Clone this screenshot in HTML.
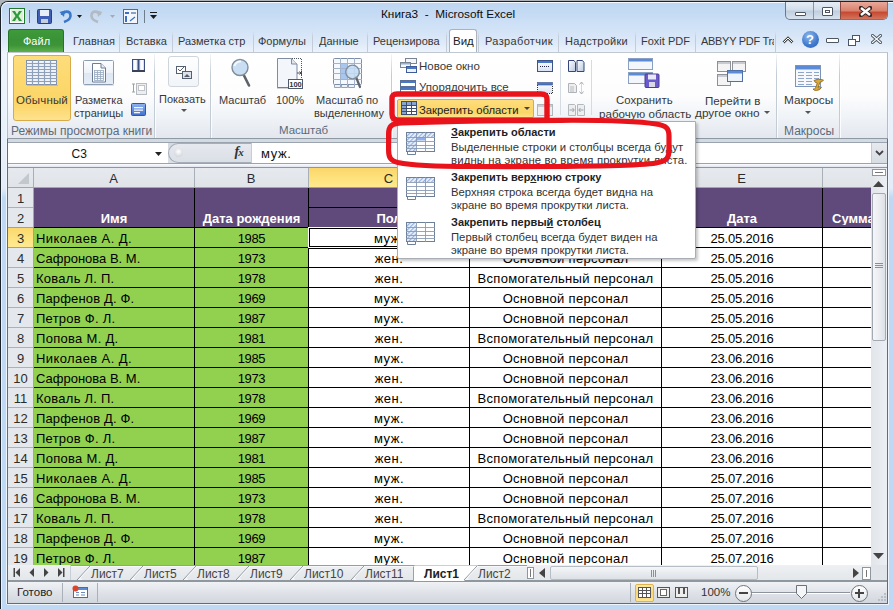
<!DOCTYPE html><html><head><meta charset="utf-8"><style>
*{margin:0;padding:0;box-sizing:border-box}
html,body{width:893px;height:609px;overflow:hidden;background:#c9d9ee}
body{position:relative;font-family:"Liberation Sans",sans-serif;color:#000}
.a{position:absolute}
.t{position:absolute;white-space:nowrap;line-height:1}
.rb{font-size:11px;color:#383838}
.cell{position:absolute;white-space:nowrap;font-size:13px;line-height:13px}
</style></head><body>
<div class="a" style="left:0;top:0;width:893px;height:609px;background:#aeb4ba"></div>
<div class="a" style="left:0;top:1px;width:900px;height:620px;background:linear-gradient(#bcd5f2,#cfe1f6 24px,#dde9f8 40px,#eef5fc 52px,#e3edf9 186px,#bfd8f4 196px,#bfd8f4);border-top:1px solid #1c232b;border-left:1px solid #1c232b;border-radius:8px 0 0 0"></div>
<div class="a" style="left:1px;top:2px;width:900px;height:620px;border-top:1px solid #f4f9ff;border-left:1px solid #e8f2fc;border-radius:7px 0 0 0"></div>
<div class="a" style="left:6px;top:52px;width:1px;height:552px;background:#eef5fd"></div>
<div class="a" style="left:7px;top:52px;width:1px;height:552px;background:#5f6e7e"></div>
<div class="a" style="left:887px;top:52px;width:1px;height:552px;background:#5f6e7e"></div>
<div class="a" style="left:888px;top:52px;width:1px;height:552px;background:#eef5fd"></div>
<div class="a" style="left:7px;top:603px;width:881px;height:1px;background:#5f6e7e"></div>
<div class="a" style="left:7px;top:604px;width:882px;height:1px;background:#eef5fd"></div>
<svg class="a" style="left:9px;top:8px" width="16" height="16" viewBox="0 0 16 16">
<rect x="0.5" y="0.5" width="15" height="15" fill="#fff" stroke="#1f7a2e"/>
<rect x="2" y="2" width="12" height="12" fill="#dff0da"/>
<path d="M3 3h3l2 3.5L10 3h3l-3.5 5L13 13h-3l-2-3.5L6 13H3l3.5-5z" fill="#2e9a3a"/>
</svg>
<div class="a" style="left:29px;top:10px;width:1px;height:13px;background:#6f7c8a"></div>
<svg class="a" style="left:37px;top:9px" width="15" height="15" viewBox="0 0 15 15">
<rect x="0.5" y="0.5" width="14" height="14" rx="1" fill="#3f5fb5" stroke="#2a3f80"/>
<rect x="3" y="1" width="9" height="6" fill="#e8eef8"/>
<rect x="4" y="10" width="7" height="4" fill="#c6cfdc"/>
</svg>
<svg class="a" style="left:59px;top:9px" width="26" height="15" viewBox="0 0 26 15">
<path d="M3 6 C4 2 11 1 11.5 6 C12 10 8 12 5 13" fill="none" stroke="#3a77c6" stroke-width="2.6"/>
<path d="M0.5 3 L6 1.5 L5 8 Z" fill="#3a77c6"/>
<path d="M18 6h5l-2.5 3z" fill="#1b1b1b"/>
</svg>
<svg class="a" style="left:90px;top:9px" width="28" height="15" viewBox="0 0 28 15">
<path d="M10 6 C9 2 2 1 1.5 6 C1 10 5 12 8 13" fill="none" stroke="#b4bac2" stroke-width="2.6"/>
<path d="M12.5 3 L7 1.5 L8 8 Z" fill="#b4bac2"/>
<path d="M20 6h5l-2.5 3z" fill="#a5abb3"/>
</svg>
<svg class="a" style="left:123px;top:9px" width="15" height="15" viewBox="0 0 15 15">
<rect x="0.5" y="0.5" width="14" height="14" fill="#f3f6fb" stroke="#5a6a85"/>
<rect x="2" y="3" width="4" height="2" fill="#3d6fc2"/><rect x="8" y="3" width="5" height="2" fill="#8aa1c8"/>
<rect x="2" y="7" width="2" height="6" fill="#3d6fc2"/><path d="M7 12 l5 -4" stroke="#3d6fc2" stroke-width="1.3"/>
</svg>
<div class="a" style="left:144px;top:10px;width:1px;height:13px;background:#6f7c8a"></div>
<div class="a" style="left:150px;top:12px;width:7px;height:1px;background:#1b1b1b"></div>
<svg class="a" style="left:150px;top:15px" width="7" height="4"><path d="M0 0h7l-3.5 4z" fill="#1b1b1b"/></svg>
<div class="t" style="left:381px;top:9px;font-size:11.8px;color:#0c0c0c">Книга3 &nbsp;- &nbsp;Microsoft Excel</div>
<div class="a" style="left:785px;top:2px;width:103px;height:18px;border:1px solid #6b7889;border-top:none;border-radius:0 0 5px 5px;overflow:hidden;background:linear-gradient(#e6edf6,#d3deeb 45%,#c0cede 55%,#d8e3ef)">
<div class="a" style="left:27px;top:0;width:1px;height:19px;background:#8895a5"></div>
<div class="a" style="left:54px;top:0;width:48px;height:19px;background:linear-gradient(#e9a99a,#d9826e 45%,#c64a32 55%,#d8806a);border-left:1px solid #8a4a40"></div>
<div class="a" style="left:9px;top:10px;width:11px;height:4px;background:#fff;border:1px solid #4b5563;border-radius:1px"></div>
<div class="a" style="left:36px;top:5px;width:11px;height:9px;border:1px solid #4b5563;background:#fff;border-radius:1px"><div class="a" style="left:2px;top:2px;width:5px;height:3px;border:1px solid #4b5563"></div></div>
<svg class="a" style="left:73px;top:4px" width="13" height="11" viewBox="0 0 13 11"><path d="M2 2 L11 9 M11 2 L2 9" stroke="#3a2a28" stroke-width="4.4" stroke-linecap="square"/><path d="M2 2 L11 9 M11 2 L2 9" stroke="#fff" stroke-width="2.4" stroke-linecap="butt"/></svg>
</div>
<div class="a" style="left:8px;top:29px;width:56px;height:23px;border-radius:3px 3px 0 0;background:linear-gradient(#3f9a3a,#3a9236 45%,#3e9538 70%,#5cb04c);border:1px solid #257527;border-bottom:none"></div>
<div class="t" style="left:23px;top:36px;font-size:11px;color:#fff">Файл</div>
<div class="t rb" style="left:73px;top:36px;font-size:11px;width:45px;overflow:hidden;letter-spacing:0px">Главная</div>
<div class="t rb" style="left:126px;top:36px;font-size:11px;width:45px;overflow:hidden;letter-spacing:0px">Вставка</div>
<div class="t rb" style="left:178px;top:36px;font-size:11px;width:74px;overflow:hidden;letter-spacing:0px">Разметка стр</div>
<div class="t rb" style="left:258px;top:36px;font-size:11px;width:53px;overflow:hidden;letter-spacing:0px">Формулы</div>
<div class="t rb" style="left:319px;top:36px;font-size:11px;width:47px;overflow:hidden;letter-spacing:0px">Данные</div>
<div class="t rb" style="left:373px;top:36px;font-size:11px;width:72px;overflow:hidden;letter-spacing:0px">Рецензирова</div>
<div class="a" style="left:449px;top:29px;width:28px;height:24px;background:linear-gradient(#fff,#fdfeff);border:1px solid #aab2bd;border-bottom:none;border-radius:3px 3px 0 0"></div>
<div class="t rb" style="left:453px;top:36px;font-size:11.5px;color:#222">Вид</div>
<div class="t rb" style="left:485px;top:36px;font-size:11px;width:72px;overflow:hidden;letter-spacing:0.35px">Разработчик</div>
<div class="t rb" style="left:565px;top:36px;font-size:11px;width:69px;overflow:hidden;letter-spacing:0.25px">Надстройки</div>
<div class="t rb" style="left:641px;top:36px;font-size:11px;width:53px;overflow:hidden;letter-spacing:0px">Foxit PDF</div>
<div class="t rb" style="left:701px;top:36px;font-size:11px;width:73px;overflow:hidden;letter-spacing:-0.3px">ABBYY PDF Tra</div>
<div class="a" style="left:119px;top:31px;width:1px;height:21px;background:linear-gradient(rgba(255,255,255,0),#c3ccd8 30%,#c3ccd8)"></div>
<div class="a" style="left:172px;top:31px;width:1px;height:21px;background:linear-gradient(rgba(255,255,255,0),#c3ccd8 30%,#c3ccd8)"></div>
<div class="a" style="left:253px;top:31px;width:1px;height:21px;background:linear-gradient(rgba(255,255,255,0),#c3ccd8 30%,#c3ccd8)"></div>
<div class="a" style="left:312px;top:31px;width:1px;height:21px;background:linear-gradient(rgba(255,255,255,0),#c3ccd8 30%,#c3ccd8)"></div>
<div class="a" style="left:367px;top:31px;width:1px;height:21px;background:linear-gradient(rgba(255,255,255,0),#c3ccd8 30%,#c3ccd8)"></div>
<div class="a" style="left:446px;top:31px;width:1px;height:21px;background:linear-gradient(rgba(255,255,255,0),#c3ccd8 30%,#c3ccd8)"></div>
<div class="a" style="left:478px;top:31px;width:1px;height:21px;background:linear-gradient(rgba(255,255,255,0),#c3ccd8 30%,#c3ccd8)"></div>
<div class="a" style="left:558px;top:31px;width:1px;height:21px;background:linear-gradient(rgba(255,255,255,0),#c3ccd8 30%,#c3ccd8)"></div>
<div class="a" style="left:635px;top:31px;width:1px;height:21px;background:linear-gradient(rgba(255,255,255,0),#c3ccd8 30%,#c3ccd8)"></div>
<div class="a" style="left:695px;top:31px;width:1px;height:21px;background:linear-gradient(rgba(255,255,255,0),#c3ccd8 30%,#c3ccd8)"></div>
<div class="a" style="left:775px;top:31px;width:1px;height:21px;background:linear-gradient(rgba(255,255,255,0),#c3ccd8 30%,#c3ccd8)"></div>
<svg class="a" style="left:782px;top:35px" width="12" height="10"><path d="M1.5 7.5 L6 3 L10.5 7.5" fill="none" stroke="#444" stroke-width="2.6"/><path d="M1.5 7.5 L6 3 L10.5 7.5" fill="none" stroke="#fff" stroke-width="1"/></svg>
<div class="a" style="left:802px;top:31px;width:17px;height:17px;border-radius:50%;background:radial-gradient(circle at 40% 30%,#8fb8ec,#3f78cc 60%,#2d62b5)"></div>
<div class="t" style="left:806px;top:33px;font-size:13px;font-weight:bold;color:#fff">?</div>
<div class="a" style="left:826px;top:38px;width:13px;height:5px;border:1px solid #4b5563;background:#fff;border-radius:1px"></div>
<div class="a" style="left:852px;top:35px;width:8px;height:7px;border:1px solid #4b5563;background:#fff"></div><div class="a" style="left:848px;top:39px;width:8px;height:7px;border:1px solid #4b5563;background:#fff"></div>
<svg class="a" style="left:871px;top:34px" width="11" height="10"><path d="M1.5 1.5 L9.5 8.5 M9.5 1.5 L1.5 8.5" stroke="#4b5563" stroke-width="3" stroke-linecap="square"/><path d="M1.5 1.5 L9.5 8.5 M9.5 1.5 L1.5 8.5" stroke="#fff" stroke-width="1.2" stroke-linecap="square"/></svg>
<div class="a" style="left:7px;top:52px;width:881px;height:87px;background:linear-gradient(#fff,#fdfdfe 50%,#f0f3f7 75%,#e3e7ee);border:1px solid #b6bcc6;border-top-color:#c0c8d2"></div>
<div class="a" style="left:154px;top:54px;width:1px;height:84px;background:linear-gradient(rgba(200,208,218,.2),#c3cbd5 25%,#c3cbd5)"></div><div class="a" style="left:155px;top:54px;width:1px;height:84px;background:rgba(255,255,255,.8)"></div>
<div class="a" style="left:210px;top:54px;width:1px;height:84px;background:linear-gradient(rgba(200,208,218,.2),#c3cbd5 25%,#c3cbd5)"></div><div class="a" style="left:211px;top:54px;width:1px;height:84px;background:rgba(255,255,255,.8)"></div>
<div class="a" style="left:391px;top:54px;width:1px;height:84px;background:linear-gradient(rgba(200,208,218,.2),#c3cbd5 25%,#c3cbd5)"></div><div class="a" style="left:392px;top:54px;width:1px;height:84px;background:rgba(255,255,255,.8)"></div>
<div class="a" style="left:776px;top:54px;width:1px;height:84px;background:linear-gradient(rgba(200,208,218,.2),#c3cbd5 25%,#c3cbd5)"></div><div class="a" style="left:777px;top:54px;width:1px;height:84px;background:rgba(255,255,255,.8)"></div>
<div class="a" style="left:839px;top:54px;width:1px;height:84px;background:linear-gradient(rgba(200,208,218,.2),#c3cbd5 25%,#c3cbd5)"></div><div class="a" style="left:840px;top:54px;width:1px;height:84px;background:rgba(255,255,255,.8)"></div>
<div class="a" style="left:887px;top:53px;width:1px;height:85px;background:#b6bcc6"></div>
<div class="t" style="left:11px;top:125px;font-size:12px;color:#5c6a7c">Режимы просмотра книги</div>
<div class="t" style="left:279px;top:125px;font-size:11.5px;color:#5c6a7c">Масштаб</div>
<div class="t" style="left:784px;top:125px;font-size:12px;color:#5c6a7c">Макросы</div>
<div class="a" style="left:13px;top:55px;width:58px;height:66px;border:1px solid #d9aa4a;border-radius:3px;background:linear-gradient(#fddd7c,#fcd86e 40%,#fbd566 75%,#fde38e)"></div>
<svg class="a" style="left:26px;top:60px" width="32" height="26" viewBox="0 0 32 26"><rect x="1" y="25" width="31" height="1" fill="rgba(0,0,0,.12)"/><rect x="0.5" y="0.5" width="30" height="24" fill="#f8faff" stroke="#8090aa"/><line x1="0" y1="3.5" x2="31" y2="3.5" stroke="#8fa0bb" stroke-width="1.2"/><line x1="0" y1="6.5" x2="31" y2="6.5" stroke="#8fa0bb" stroke-width="1.2"/><line x1="0" y1="9.5" x2="31" y2="9.5" stroke="#8fa0bb" stroke-width="1.2"/><line x1="0" y1="12.5" x2="31" y2="12.5" stroke="#8fa0bb" stroke-width="1.2"/><line x1="0" y1="15.5" x2="31" y2="15.5" stroke="#8fa0bb" stroke-width="1.2"/><line x1="0" y1="18.5" x2="31" y2="18.5" stroke="#8fa0bb" stroke-width="1.2"/><line x1="0" y1="21.5" x2="31" y2="21.5" stroke="#8fa0bb" stroke-width="1.2"/><line x1="6.5" y1="0" x2="6.5" y2="25" stroke="#8fa0bb" stroke-width="1.2"/><line x1="12.5" y1="0" x2="12.5" y2="25" stroke="#8fa0bb" stroke-width="1.2"/><line x1="18.5" y1="0" x2="18.5" y2="25" stroke="#8fa0bb" stroke-width="1.2"/><line x1="24.5" y1="0" x2="24.5" y2="25" stroke="#8fa0bb" stroke-width="1.2"/></svg>
<div class="t" style="left:16px;top:95px;font-size:11.5px;color:#383838;letter-spacing:0.15px">Обычный</div>
<svg class="a" style="left:83px;top:60px" width="32" height="26" viewBox="0 0 32 26">
<defs><linearGradient id="plg" x1="0" y1="0" x2="0" y2="1"><stop offset="0" stop-color="#fdfdfe"/><stop offset=".5" stop-color="#eef3f9"/><stop offset=".52" stop-color="#dde7f3"/><stop offset="1" stop-color="#e6edf6"/></linearGradient></defs>
<rect x="1" y="25" width="30" height="1" fill="rgba(0,0,0,.1)"/>
<rect x="0.5" y="0.5" width="30" height="24" rx="1" fill="url(#plg)" stroke="#8e9db3"/>
<path d="M9.5 3.5h8.5l4.5 4.5v14h-13z" fill="#fff" stroke="#6d7d94"/>
<path d="M18 3.5v4.5h4.5" fill="#e9eef5" stroke="#6d7d94"/>
<rect x="11.5" y="10.5" width="9" height="10" fill="#f4f7fb" stroke="#98a8c0" stroke-width=".8"/>
<path d="M11.5 12.5h9M11.5 14.5h9M11.5 16.5h9M11.5 18.5h9M14.5 10.5v10M17.5 10.5v10" stroke="#98a8c0" stroke-width=".8"/>
</svg>
<div class="t rb" style="left:75px;top:95px">Разметка</div>
<div class="t rb" style="left:74px;top:108px">страницы</div>
<svg class="a" style="left:132px;top:59px" width="13" height="13"><rect x="0.5" y="0.5" width="12" height="12" fill="#eef2fa" stroke="#3c4f80"/><rect x="1" y="1" width="4.5" height="10" fill="#d8e4f6"/><rect x="7.5" y="1" width="4.5" height="10" fill="#d8e4f6"/><rect x="2" y="1" width="2.5" height="10" fill="#fbfcff"/><rect x="8.5" y="1" width="2.5" height="10" fill="#fbfcff"/><rect x="5.5" y="1" width="2" height="11" fill="#3c4f80"/><rect x="0" y="11" width="13" height="2" fill="#3a4258"/></svg>
<svg class="a" style="left:131px;top:80px" width="16" height="15"><rect x="5.5" y="3.5" width="10" height="11" fill="#eee" stroke="#b7bcc3"/><rect x="7.5" y="5.5" width="6" height="5" fill="#fff" stroke="#c0c4ca"/><path d="M1 4h3M2.5 4v8M1 12h3" stroke="#9aa0a8"/></svg>
<svg class="a" style="left:131px;top:103px" width="15" height="13"><defs><linearGradient id="fsg" x1="0" y1="0" x2="0" y2="1"><stop offset="0" stop-color="#8fb4ee"/><stop offset="1" stop-color="#3f6fd0"/></linearGradient></defs><rect x="0.5" y="0.5" width="14" height="12" rx="1" fill="url(#fsg)" stroke="#34569a"/><rect x="3" y="4" width="9" height="1.3" fill="#f2f6fd"/><rect x="3" y="6.5" width="9" height="1.3" fill="#f2f6fd"/><rect x="3" y="9" width="6" height="1.3" fill="#f2f6fd"/></svg>
<div class="a" style="left:168px;top:56px;width:31px;height:31px;border:1px solid #cfd5dd;border-radius:3px;background:linear-gradient(#fff,#f1f4f8)"></div>
<svg class="a" style="left:176px;top:64px" width="16" height="15"><rect x="0.5" y="2.5" width="9" height="7" fill="#fff" stroke="#55606e"/><path d="M2 5l2 2 4-4" stroke="#55606e" fill="none"/><rect x="6.5" y="7.5" width="9" height="7" fill="#dde3ea" stroke="#55606e"/><path d="M8 13l3-3 3 3z" fill="#55606e"/></svg>
<div class="t rb" style="left:159px;top:93.5px">Показать</div>
<svg class="a" style="left:181px;top:109px" width="6" height="4"><path d="M0 0h6l-3 3z" fill="#555"/></svg>
<svg class="a" style="left:231px;top:58px" width="21" height="30" viewBox="0 0 21 30">
<path d="M12.5 16.5 L18 27.5" stroke="#5e636a" stroke-width="2.6" stroke-linecap="round"/>
<circle cx="9" cy="9.5" r="8" fill="#c9def2" stroke="#7f8c9b" stroke-width="1.4"/>
<path d="M3.5 8 A6 6 0 0 1 10 3.5" stroke="#f4f9fe" stroke-width="2" fill="none"/>
</svg>
<div class="t rb" style="left:219px;top:95px">Масштаб</div>
<svg class="a" style="left:277px;top:58px" width="27" height="31" viewBox="0 0 27 31">
<path d="M0.5 0.5h14l5.5 5.5v23.5H0.5z" fill="#f3f6fb" stroke="#7f8da3"/>
<path d="M14.5 0.5v5.5h5.5" fill="#dfe6ef" stroke="#7f8da3"/>
<path d="M15 0.5h9.5v29.5h-24" fill="none" stroke="#4d5560" stroke-dasharray="1 1"/>
<path d="M20 15h4M22.5 13.5l1.5 1.5-1.5 1.5M24.5 12.5v5" stroke="#3a3f46" stroke-width="0.9" fill="none"/>
<rect x="11.5" y="21.5" width="14" height="9" fill="#fff" stroke="#4f5a68"/>
<text x="18.5" y="29" font-size="7.5" text-anchor="middle" font-family="Liberation Sans" font-weight="bold" fill="#2a3548">100</text>
</svg>
<div class="t rb" style="left:276px;top:95px">100%</div>
<svg class="a" style="left:333px;top:58px" width="30" height="31" viewBox="0 0 30 31">
<rect x="0.5" y="0.5" width="28" height="26" rx="1" fill="#f5f8fc" stroke="#7d8ea8"/>
<rect x="7.5" y="5.5" width="7" height="16" fill="#a9c6ee"/>
<path d="M0 5.5h29M0 10.5h29M0 15.5h29M0 21.5h29M7.5 0v27M14.5 0v27M21.5 0v27" stroke="#a3b3cc"/>
<path d="M1.5 27v2.5h6v-2.5M8.5 27v2.5h6v-2.5M15.5 27v2.5h6v-2.5" fill="#eef2f8" stroke="#7d8ea8" stroke-width=".8"/>
<path d="M23 19 L27 29" stroke="#5e636a" stroke-width="2.2" stroke-linecap="round"/>
<circle cx="19.5" cy="14" r="6.8" fill="#c2daf3" fill-opacity=".85" stroke="#7f8c9b" stroke-width="1.3"/>
</svg>
<div class="t rb" style="left:316px;top:95px">Масштаб по</div>
<div class="t rb" style="left:314px;top:108px">выделенному</div>
<svg class="a" style="left:400px;top:58px" width="17" height="15"><rect x="5.5" y="0.5" width="11" height="5" fill="#f4f6f9" stroke="#7a8594"/><rect x="0.5" y="4.5" width="10" height="5" fill="#f4f6f9" stroke="#7a8594"/><rect x="1" y="5" width="9" height="1.5" fill="#8fb0e0"/><rect x="6.5" y="8.5" width="10" height="6" fill="#eef3fa" stroke="#3e5a9a"/><rect x="7" y="9" width="9" height="2" fill="#4a78c8"/></svg>
<div class="t rb" style="left:419px;top:61px;font-size:11.5px">Новое окно</div>
<svg class="a" style="left:400px;top:80px" width="16" height="14"><rect x="0.5" y="0.5" width="15" height="6" fill="#fff" stroke="#5a6f96"/><rect x="1" y="1" width="14" height="2" fill="#4a78c8"/><rect x="0.5" y="7.5" width="15" height="6" fill="#fff" stroke="#5a6f96"/><rect x="1" y="8" width="14" height="2" fill="#4a78c8"/></svg>
<div class="t rb" style="left:419px;top:82px;font-size:11.5px">Упорядочить все</div>
<div class="a" style="left:397px;top:99px;width:137px;height:19px;border:1px solid #d9aa4a;border-radius:2px;background:linear-gradient(#fddd7c,#fcd86e 40%,#fbd566 75%,#fde38e)"></div>
<svg class="a" style="left:401px;top:101px" width="16" height="15"><rect x="0.5" y="0.5" width="15" height="13" fill="#fff" stroke="#3e4e6e"/><rect x="1" y="1" width="14" height="3" fill="#8aa4d0"/><rect x="1" y="1" width="4" height="12" fill="#8aa4d0"/><path d="M0 4.5h16M0 7.5h16M0 10.5h16M5.5 0v14M10.5 0v14" stroke="#3e4e6e"/></svg>
<div class="t rb" style="left:419px;top:105px;color:#222;font-size:11.3px">Закрепить области</div>
<svg class="a" style="left:524px;top:107px" width="6" height="4"><path d="M0 0h6l-3 3z" fill="#444"/></svg>
<svg class="a" style="left:537px;top:60px" width="16" height="12"><defs><linearGradient id="wg1" x1="0" y1="0" x2="0" y2="1"><stop offset="0" stop-color="#fff"/><stop offset="1" stop-color="#d9e3f2"/></linearGradient></defs><rect x="0.5" y="0.5" width="15" height="11" fill="url(#wg1)" stroke="#3e5388"/><rect x="1" y="1" width="14" height="2" fill="#4a78c8"/><path d="M3 6.5h10" stroke="#1e2a44" stroke-width="1.2" stroke-dasharray="1 1"/></svg>
<svg class="a" style="left:537px;top:82px" width="16" height="12"><rect x="0.5" y="0.5" width="15" height="11" fill="url(#wg1)"/><rect x="0.5" y="0.5" width="15" height="2.5" fill="#4a78c8" stroke="#3e5388" stroke-width=".6"/><path d="M0.5 3v8.5h15V3" fill="none" stroke="#333" stroke-dasharray="1 1"/></svg>
<svg class="a" style="left:537px;top:104px" width="16" height="12"><rect x="0.5" y="0.5" width="15" height="11" fill="#efefef" stroke="#b1b6bd"/><rect x="1" y="1" width="14" height="2" fill="#c9ccd1"/></svg>
<div class="a" style="left:560px;top:60px;width:1px;height:55px;background:#d5dbe3"></div>
<svg class="a" style="left:568px;top:60px" width="17" height="12"><defs><linearGradient id="pg1" x1="0" y1="0" x2="1" y2="1"><stop offset="0" stop-color="#fff"/><stop offset="1" stop-color="#b9c9e2"/></linearGradient></defs><path d="M0.5 0.5h5.5l1.5 2v9h-7z" fill="url(#pg1)" stroke="#34477a"/><path d="M9 0.5h5.5l1.5 2v9h-7z" fill="url(#pg1)" stroke="#34477a"/></svg>
<svg class="a" style="left:568px;top:81px" width="17" height="14"><path d="M0.5 2.5h6l2 2v7h-8z" fill="#eee" stroke="#aeb3ba"/><path d="M2 6h4M2 8h4M2 10h4" stroke="#b8bdc4"/><path d="M13.5 1.5v11" stroke="#a8aeb6" stroke-dasharray="1 1"/><path d="M11.5 3.5l2-2.5 2 2.5M11.5 10.5l2 2.5 2-2.5" stroke="#a8aeb6" fill="none"/></svg>
<svg class="a" style="left:568px;top:104px" width="17" height="12"><path d="M0.5 0.5h6l1 1v10h-7z" fill="#eee" stroke="#b3b8bf"/><path d="M9.5 0.5h6l1 1v10h-7z" fill="#eee" stroke="#b3b8bf"/><path d="M1.5 6h4.5M4.5 4l1.8 2-1.8 2M15.5 6h-4.5M12.5 4l-1.8 2 1.8 2" stroke="#9aa0a8" fill="none"/></svg>
<div class="a" style="left:591px;top:60px;width:1px;height:55px;background:#d5dbe3"></div>
<svg class="a" style="left:628px;top:58px" width="32" height="30" viewBox="0 0 32 30">
<rect x="0.5" y="0.5" width="24" height="11" fill="#f3f6fb" stroke="#8aa0c2"/><rect x="1" y="1" width="23" height="2.5" fill="#5b8ad6"/>
<rect x="0.5" y="14.5" width="24" height="11" fill="#f3f6fb" stroke="#8aa0c2"/><rect x="1" y="15" width="23" height="2.5" fill="#5b8ad6"/>
<rect x="17" y="16" width="14" height="13.5" rx="1" fill="#6a5acd" stroke="#4a3f8f"/><rect x="20" y="16.5" width="8" height="5" fill="#e8e8f8"/><rect x="21" y="24" width="6" height="5" fill="#d8d8e8"/>
</svg>
<div class="t rb" style="left:616px;top:95px;font-size:11.4px">Сохранить</div>
<div class="t rb" style="left:599px;top:108px;font-size:11.6px">рабочую область</div>
<svg class="a" style="left:717px;top:61px" width="31" height="26" viewBox="0 0 31 26">
<rect x="0.5" y="0.5" width="13" height="10" fill="#f4f4f4" stroke="#8c9097"/><rect x="1" y="1" width="12" height="2" fill="#c8ccd2"/>
<rect x="15.5" y="0.5" width="13" height="10" fill="#f4f4f4" stroke="#8c9097"/><rect x="16" y="1" width="12" height="2" fill="#c8ccd2"/>
<rect x="0.5" y="13.5" width="13" height="11" fill="#f4f4f4" stroke="#8c9097"/><rect x="1" y="14" width="12" height="2" fill="#c8ccd2"/>
<rect x="10.5" y="9.5" width="15" height="11" fill="#eef4fc" stroke="#4f6fa8"/><rect x="11" y="10" width="14" height="2.5" fill="#5b8ad6"/>
</svg>
<div class="t rb" style="left:705px;top:95px;font-size:11.6px">Перейти в</div>
<div class="t rb" style="left:695px;top:108px;font-size:11.8px">другое окно</div>
<svg class="a" style="left:764px;top:111px" width="6" height="4"><path d="M0 0h6l-3 3z" fill="#555"/></svg>
<svg class="a" style="left:795px;top:65px" width="30" height="26" viewBox="0 0 30 26">
<rect x="0.5" y="0.5" width="25" height="21" fill="#f6f8fc" stroke="#7d93b8"/><rect x="1" y="1" width="24" height="3.5" fill="#5b8ad6"/>
<path d="M3 7.5h6M11 7.5h6M19 7.5h5M3 10.5h6M11 10.5h6M19 10.5h5M3 13.5h6M11 13.5h6M19 13.5h5M3 16.5h6M11 16.5h6M3 19.5h6M11 19.5h6" stroke="#8ea6cc" stroke-width="1.2"/>
<path d="M19 15.5 q4 -2.5 9.5 -0.5 q-1 2 -3.5 2.2 l-2 5.5 q2 0.5 3.5 -0.5 q-1 3 -5 3.3 q-3 0 -3.5 -1.5 q2 0.3 2.5 -1 l1.8 -5 q-2 0.3 -3.3 -2.5z" fill="#d9a93a" stroke="#8a6418" stroke-width="0.8"/>
</svg>
<div class="t rb" style="left:784px;top:95px;font-size:11.8px">Макросы</div>
<svg class="a" style="left:805px;top:111px" width="6" height="4"><path d="M0 0h6l-3 3z" fill="#555"/></svg>
<div class="a" style="left:7px;top:138px;width:881px;height:1px;background:#8f99a4"></div>
<div class="a" style="left:8px;top:139px;width:879px;height:29px;background:linear-gradient(#d3d9e0,#dde2e8)"></div>
<div class="a" style="left:8px;top:142px;width:879px;height:1px;background:#9ba4ae"></div>
<div class="a" style="left:8px;top:163px;width:879px;height:1px;background:#9ba4ae"></div>
<div class="a" style="left:8px;top:164px;width:879px;height:3px;background:linear-gradient(#fafbfd,#e3e6f3)"></div>
<div class="a" style="left:8px;top:167px;width:879px;height:1px;background:#8e969f"></div>
<div class="a" style="left:8px;top:143px;width:160px;height:20px;background:#fff"></div>
<div class="t" style="left:71.5px;top:148px;font-size:12px;color:#111">C3</div>
<svg class="a" style="left:155px;top:152px" width="7" height="5"><path d="M0 0h7l-3.5 4z" fill="#222"/></svg>
<div class="a" style="left:168px;top:143px;width:84px;height:20px;background:linear-gradient(#e6e9ee,#dadfe6);border-radius:10px 0 0 10px;border:1px solid #a6aeb8;border-right:1px solid #c7cdd4"></div>
<div class="a" style="left:174px;top:148px;width:9px;height:9px;border-radius:50%;background:radial-gradient(circle at 50% 40%,#fff,#c4c9d0)"></div>
<div class="t" style="left:234.5px;top:145px;font-size:14px;font-style:italic;font-family:'Liberation Serif',serif;color:#333;font-weight:bold">f<span style="font-size:11px;margin-left:-1px">x</span></div>
<div class="a" style="left:252px;top:143px;width:619px;height:20px;background:#fff"></div>
<div class="t" style="left:261px;top:147px;font-size:13px;color:#111;letter-spacing:0.6px">муж.</div>
<div class="a" style="left:871px;top:143px;width:16px;height:20px;background:linear-gradient(#e6e9ee,#d8dde4);border-left:1px solid #c4cad1"></div>
<svg class="a" style="left:875px;top:150px" width="9" height="6"><path d="M1 1l3.5 3.5L8 1" fill="none" stroke="#444" stroke-width="1.8"/></svg>
<div class="a" style="left:8px;top:168px;width:863px;height:397px;background:#fff"></div>
<div class="a" style="left:8px;top:168px;width:863px;height:19px;background:linear-gradient(#e6e9ed,#e0e3e8)"></div>
<div class="a" style="left:8px;top:187px;width:863px;height:1px;background:#9ea6b1"></div>
<svg class="a" style="left:18px;top:173px" width="12" height="11"><path d="M11 0V11H0z" fill="#c3c8ce"/></svg>
<div class="a" style="left:33px;top:168px;width:1px;height:19px;background:#a9afb7"></div>
<div class="t" style="left:93.5px;width:40px;text-align:center;top:172px;font-size:13px;color:#2b2b2b">A</div>
<div class="a" style="left:194px;top:168px;width:1px;height:19px;background:#a9afb7"></div>
<div class="t" style="left:231.0px;width:40px;text-align:center;top:172px;font-size:13px;color:#2b2b2b">B</div>
<div class="a" style="left:308px;top:168px;width:162px;height:20px;background:linear-gradient(#fad66b,#fde17a 50%,#ffe98e);border:1px solid #d59b32;border-top:none"></div>
<div class="a" style="left:308px;top:168px;width:1px;height:19px;background:#a9afb7"></div>
<div class="t" style="left:368.5px;width:40px;text-align:center;top:172px;font-size:13px;color:#2b2b2b">C</div>
<div class="a" style="left:469px;top:168px;width:1px;height:19px;background:#a9afb7"></div>
<div class="t" style="left:545.0px;width:40px;text-align:center;top:172px;font-size:13px;color:#2b2b2b">D</div>
<div class="a" style="left:661px;top:168px;width:1px;height:19px;background:#a9afb7"></div>
<div class="t" style="left:721.5px;width:40px;text-align:center;top:172px;font-size:13px;color:#2b2b2b">E</div>
<div class="a" style="left:822px;top:168px;width:1px;height:19px;background:#a9afb7"></div>
<div class="t" style="left:891.0px;width:40px;text-align:center;top:172px;font-size:13px;color:#2b2b2b">F</div>
<div class="a" style="left:8px;top:188px;width:25px;height:377px;background:#e4e7ec"></div>
<div class="a" style="left:33px;top:188px;width:1px;height:377px;background:#9ea6b1"></div>
<div class="a" style="left:8px;top:207px;width:25px;height:1px;background:#a9b1ba"></div>
<div class="t" style="left:8px;width:25px;text-align:center;top:192px;font-size:13px;color:#2b2b2b">1</div>
<div class="a" style="left:8px;top:227px;width:25px;height:1px;background:#a9b1ba"></div>
<div class="t" style="left:8px;width:25px;text-align:center;top:212px;font-size:13px;color:#2b2b2b">2</div>
<div class="a" style="left:8px;top:227px;width:26px;height:21px;background:linear-gradient(#fbd86e,#fde27e 50%,#ffe890);border:1px solid #d59b32;border-left:none"></div>
<div class="t" style="left:8px;width:25px;text-align:center;top:232px;font-size:13px;color:#2b2b2b">3</div>
<div class="a" style="left:8px;top:267px;width:25px;height:1px;background:#a9b1ba"></div>
<div class="t" style="left:8px;width:25px;text-align:center;top:252px;font-size:13px;color:#2b2b2b">4</div>
<div class="a" style="left:8px;top:287px;width:25px;height:1px;background:#a9b1ba"></div>
<div class="t" style="left:8px;width:25px;text-align:center;top:272px;font-size:13px;color:#2b2b2b">5</div>
<div class="a" style="left:8px;top:307px;width:25px;height:1px;background:#a9b1ba"></div>
<div class="t" style="left:8px;width:25px;text-align:center;top:292px;font-size:13px;color:#2b2b2b">6</div>
<div class="a" style="left:8px;top:327px;width:25px;height:1px;background:#a9b1ba"></div>
<div class="t" style="left:8px;width:25px;text-align:center;top:312px;font-size:13px;color:#2b2b2b">7</div>
<div class="a" style="left:8px;top:347px;width:25px;height:1px;background:#a9b1ba"></div>
<div class="t" style="left:8px;width:25px;text-align:center;top:332px;font-size:13px;color:#2b2b2b">8</div>
<div class="a" style="left:8px;top:367px;width:25px;height:1px;background:#a9b1ba"></div>
<div class="t" style="left:8px;width:25px;text-align:center;top:352px;font-size:13px;color:#2b2b2b">9</div>
<div class="a" style="left:8px;top:387px;width:25px;height:1px;background:#a9b1ba"></div>
<div class="t" style="left:8px;width:25px;text-align:center;top:372px;font-size:13px;color:#2b2b2b">10</div>
<div class="a" style="left:8px;top:407px;width:25px;height:1px;background:#a9b1ba"></div>
<div class="t" style="left:8px;width:25px;text-align:center;top:392px;font-size:13px;color:#2b2b2b">11</div>
<div class="a" style="left:8px;top:427px;width:25px;height:1px;background:#a9b1ba"></div>
<div class="t" style="left:8px;width:25px;text-align:center;top:412px;font-size:13px;color:#2b2b2b">12</div>
<div class="a" style="left:8px;top:447px;width:25px;height:1px;background:#a9b1ba"></div>
<div class="t" style="left:8px;width:25px;text-align:center;top:432px;font-size:13px;color:#2b2b2b">13</div>
<div class="a" style="left:8px;top:467px;width:25px;height:1px;background:#a9b1ba"></div>
<div class="t" style="left:8px;width:25px;text-align:center;top:452px;font-size:13px;color:#2b2b2b">14</div>
<div class="a" style="left:8px;top:487px;width:25px;height:1px;background:#a9b1ba"></div>
<div class="t" style="left:8px;width:25px;text-align:center;top:472px;font-size:13px;color:#2b2b2b">15</div>
<div class="a" style="left:8px;top:507px;width:25px;height:1px;background:#a9b1ba"></div>
<div class="t" style="left:8px;width:25px;text-align:center;top:492px;font-size:13px;color:#2b2b2b">16</div>
<div class="a" style="left:8px;top:527px;width:25px;height:1px;background:#a9b1ba"></div>
<div class="t" style="left:8px;width:25px;text-align:center;top:512px;font-size:13px;color:#2b2b2b">17</div>
<div class="a" style="left:8px;top:547px;width:25px;height:1px;background:#a9b1ba"></div>
<div class="t" style="left:8px;width:25px;text-align:center;top:532px;font-size:13px;color:#2b2b2b">18</div>
<div class="a" style="left:8px;top:567px;width:25px;height:1px;background:#a9b1ba"></div>
<div class="t" style="left:8px;width:25px;text-align:center;top:552px;font-size:13px;color:#2b2b2b">19</div>
<div class="a" style="left:34px;top:188px;width:837px;height:39px;background:#604a7b"></div>
<div class="a" style="left:34px;top:228px;width:274px;height:337px;background:#92d050"></div>
<div class="a" style="left:194px;top:188px;width:1px;height:377px;background:#000"></div>
<div class="a" style="left:308px;top:188px;width:1px;height:377px;background:#000"></div>
<div class="a" style="left:469px;top:188px;width:1px;height:377px;background:#000"></div>
<div class="a" style="left:661px;top:188px;width:1px;height:377px;background:#000"></div>
<div class="a" style="left:822px;top:188px;width:1px;height:377px;background:#000"></div>
<div class="a" style="left:308px;top:207px;width:353px;height:1px;background:#000"></div>
<div class="a" style="left:34px;top:227px;width:837px;height:1px;background:#000"></div>
<div class="a" style="left:34px;top:247px;width:837px;height:1px;background:#000"></div>
<div class="a" style="left:34px;top:267px;width:837px;height:1px;background:#000"></div>
<div class="a" style="left:34px;top:287px;width:837px;height:1px;background:#000"></div>
<div class="a" style="left:34px;top:307px;width:837px;height:1px;background:#000"></div>
<div class="a" style="left:34px;top:327px;width:837px;height:1px;background:#000"></div>
<div class="a" style="left:34px;top:347px;width:837px;height:1px;background:#000"></div>
<div class="a" style="left:34px;top:367px;width:837px;height:1px;background:#000"></div>
<div class="a" style="left:34px;top:387px;width:837px;height:1px;background:#000"></div>
<div class="a" style="left:34px;top:407px;width:837px;height:1px;background:#000"></div>
<div class="a" style="left:34px;top:427px;width:837px;height:1px;background:#000"></div>
<div class="a" style="left:34px;top:447px;width:837px;height:1px;background:#000"></div>
<div class="a" style="left:34px;top:467px;width:837px;height:1px;background:#000"></div>
<div class="a" style="left:34px;top:487px;width:837px;height:1px;background:#000"></div>
<div class="a" style="left:34px;top:507px;width:837px;height:1px;background:#000"></div>
<div class="a" style="left:34px;top:527px;width:837px;height:1px;background:#000"></div>
<div class="a" style="left:34px;top:547px;width:837px;height:1px;background:#000"></div>
<div class="cell" style="left:34px;width:160px;text-align:center;top:212px;font-weight:bold;color:#fff">Имя</div>
<div class="cell" style="left:195px;width:113px;text-align:center;top:212px;font-weight:bold;color:#fff">Дата рождения</div>
<div class="cell" style="left:309px;width:160px;text-align:center;top:212px;font-weight:bold;color:#fff">Пол</div>
<div class="cell" style="left:470px;width:191px;text-align:center;top:212px;font-weight:bold;color:#fff">Должность</div>
<div class="cell" style="left:662px;width:160px;text-align:center;top:212px;font-weight:bold;color:#fff">Дата</div>
<div class="cell" style="left:832px;width:39px;overflow:hidden;top:212px;font-weight:bold;color:#fff">Сумма</div>
<div class="cell" style="left:36px;top:232px;letter-spacing:0.4px">Николаев А. Д.</div>
<div class="cell" style="left:195px;width:113px;text-align:center;top:232px;letter-spacing:-0.35px">1985</div>
<div class="cell" style="left:309px;width:160px;text-align:center;top:232px;letter-spacing:0.5px">муж.</div>
<div class="cell" style="left:470px;width:191px;text-align:center;top:232px;letter-spacing:0.3px">Основной персонал</div>
<div class="cell" style="left:662px;width:160px;text-align:center;top:232px;letter-spacing:-0.2px">25.05.2016</div>
<div class="cell" style="left:36px;top:252px;letter-spacing:0px">Сафронова В. М.</div>
<div class="cell" style="left:195px;width:113px;text-align:center;top:252px;letter-spacing:-0.35px">1973</div>
<div class="cell" style="left:309px;width:160px;text-align:center;top:252px;letter-spacing:0.5px">жен.</div>
<div class="cell" style="left:470px;width:191px;text-align:center;top:252px;letter-spacing:0.3px">Основной персонал</div>
<div class="cell" style="left:662px;width:160px;text-align:center;top:252px;letter-spacing:-0.2px">25.05.2016</div>
<div class="cell" style="left:36px;top:272px;letter-spacing:0.25px">Коваль Л. П.</div>
<div class="cell" style="left:195px;width:113px;text-align:center;top:272px;letter-spacing:-0.35px">1978</div>
<div class="cell" style="left:309px;width:160px;text-align:center;top:272px;letter-spacing:0.5px">жен.</div>
<div class="cell" style="left:470px;width:191px;text-align:center;top:272px;letter-spacing:0.3px">Вспомогательный персонал</div>
<div class="cell" style="left:662px;width:160px;text-align:center;top:272px;letter-spacing:-0.2px">25.05.2016</div>
<div class="cell" style="left:36px;top:292px;letter-spacing:0.15px">Парфенов Д. Ф.</div>
<div class="cell" style="left:195px;width:113px;text-align:center;top:292px;letter-spacing:-0.35px">1969</div>
<div class="cell" style="left:309px;width:160px;text-align:center;top:292px;letter-spacing:0.5px">муж.</div>
<div class="cell" style="left:470px;width:191px;text-align:center;top:292px;letter-spacing:0.3px">Основной персонал</div>
<div class="cell" style="left:662px;width:160px;text-align:center;top:292px;letter-spacing:-0.2px">25.05.2016</div>
<div class="cell" style="left:36px;top:312px;letter-spacing:0.25px">Петров Ф. Л.</div>
<div class="cell" style="left:195px;width:113px;text-align:center;top:312px;letter-spacing:-0.35px">1987</div>
<div class="cell" style="left:309px;width:160px;text-align:center;top:312px;letter-spacing:0.5px">муж.</div>
<div class="cell" style="left:470px;width:191px;text-align:center;top:312px;letter-spacing:0.3px">Основной персонал</div>
<div class="cell" style="left:662px;width:160px;text-align:center;top:312px;letter-spacing:-0.2px">25.05.2016</div>
<div class="cell" style="left:36px;top:332px;letter-spacing:0.3px">Попова М. Д.</div>
<div class="cell" style="left:195px;width:113px;text-align:center;top:332px;letter-spacing:-0.35px">1981</div>
<div class="cell" style="left:309px;width:160px;text-align:center;top:332px;letter-spacing:0.5px">жен.</div>
<div class="cell" style="left:470px;width:191px;text-align:center;top:332px;letter-spacing:0.3px">Вспомогательный персонал</div>
<div class="cell" style="left:662px;width:160px;text-align:center;top:332px;letter-spacing:-0.2px">25.05.2016</div>
<div class="cell" style="left:36px;top:352px;letter-spacing:0.4px">Николаев А. Д.</div>
<div class="cell" style="left:195px;width:113px;text-align:center;top:352px;letter-spacing:-0.35px">1985</div>
<div class="cell" style="left:309px;width:160px;text-align:center;top:352px;letter-spacing:0.5px">муж.</div>
<div class="cell" style="left:470px;width:191px;text-align:center;top:352px;letter-spacing:0.3px">Основной персонал</div>
<div class="cell" style="left:662px;width:160px;text-align:center;top:352px;letter-spacing:-0.2px">23.06.2016</div>
<div class="cell" style="left:36px;top:372px;letter-spacing:0px">Сафронова В. М.</div>
<div class="cell" style="left:195px;width:113px;text-align:center;top:372px;letter-spacing:-0.35px">1973</div>
<div class="cell" style="left:309px;width:160px;text-align:center;top:372px;letter-spacing:0.5px">жен.</div>
<div class="cell" style="left:470px;width:191px;text-align:center;top:372px;letter-spacing:0.3px">Основной персонал</div>
<div class="cell" style="left:662px;width:160px;text-align:center;top:372px;letter-spacing:-0.2px">23.06.2016</div>
<div class="cell" style="left:36px;top:392px;letter-spacing:0.25px">Коваль Л. П.</div>
<div class="cell" style="left:195px;width:113px;text-align:center;top:392px;letter-spacing:-0.35px">1978</div>
<div class="cell" style="left:309px;width:160px;text-align:center;top:392px;letter-spacing:0.5px">жен.</div>
<div class="cell" style="left:470px;width:191px;text-align:center;top:392px;letter-spacing:0.3px">Вспомогательный персонал</div>
<div class="cell" style="left:662px;width:160px;text-align:center;top:392px;letter-spacing:-0.2px">23.06.2016</div>
<div class="cell" style="left:36px;top:412px;letter-spacing:0.15px">Парфенов Д. Ф.</div>
<div class="cell" style="left:195px;width:113px;text-align:center;top:412px;letter-spacing:-0.35px">1969</div>
<div class="cell" style="left:309px;width:160px;text-align:center;top:412px;letter-spacing:0.5px">муж.</div>
<div class="cell" style="left:470px;width:191px;text-align:center;top:412px;letter-spacing:0.3px">Основной персонал</div>
<div class="cell" style="left:662px;width:160px;text-align:center;top:412px;letter-spacing:-0.2px">23.06.2016</div>
<div class="cell" style="left:36px;top:432px;letter-spacing:0.25px">Петров Ф. Л.</div>
<div class="cell" style="left:195px;width:113px;text-align:center;top:432px;letter-spacing:-0.35px">1987</div>
<div class="cell" style="left:309px;width:160px;text-align:center;top:432px;letter-spacing:0.5px">муж.</div>
<div class="cell" style="left:470px;width:191px;text-align:center;top:432px;letter-spacing:0.3px">Основной персонал</div>
<div class="cell" style="left:662px;width:160px;text-align:center;top:432px;letter-spacing:-0.2px">23.06.2016</div>
<div class="cell" style="left:36px;top:452px;letter-spacing:0.3px">Попова М. Д.</div>
<div class="cell" style="left:195px;width:113px;text-align:center;top:452px;letter-spacing:-0.35px">1981</div>
<div class="cell" style="left:309px;width:160px;text-align:center;top:452px;letter-spacing:0.5px">жен.</div>
<div class="cell" style="left:470px;width:191px;text-align:center;top:452px;letter-spacing:0.3px">Вспомогательный персонал</div>
<div class="cell" style="left:662px;width:160px;text-align:center;top:452px;letter-spacing:-0.2px">23.06.2016</div>
<div class="cell" style="left:36px;top:472px;letter-spacing:0.4px">Николаев А. Д.</div>
<div class="cell" style="left:195px;width:113px;text-align:center;top:472px;letter-spacing:-0.35px">1985</div>
<div class="cell" style="left:309px;width:160px;text-align:center;top:472px;letter-spacing:0.5px">муж.</div>
<div class="cell" style="left:470px;width:191px;text-align:center;top:472px;letter-spacing:0.3px">Основной персонал</div>
<div class="cell" style="left:662px;width:160px;text-align:center;top:472px;letter-spacing:-0.2px">25.07.2016</div>
<div class="cell" style="left:36px;top:492px;letter-spacing:0px">Сафронова В. М.</div>
<div class="cell" style="left:195px;width:113px;text-align:center;top:492px;letter-spacing:-0.35px">1973</div>
<div class="cell" style="left:309px;width:160px;text-align:center;top:492px;letter-spacing:0.5px">жен.</div>
<div class="cell" style="left:470px;width:191px;text-align:center;top:492px;letter-spacing:0.3px">Основной персонал</div>
<div class="cell" style="left:662px;width:160px;text-align:center;top:492px;letter-spacing:-0.2px">25.07.2016</div>
<div class="cell" style="left:36px;top:512px;letter-spacing:0.25px">Коваль Л. П.</div>
<div class="cell" style="left:195px;width:113px;text-align:center;top:512px;letter-spacing:-0.35px">1978</div>
<div class="cell" style="left:309px;width:160px;text-align:center;top:512px;letter-spacing:0.5px">жен.</div>
<div class="cell" style="left:470px;width:191px;text-align:center;top:512px;letter-spacing:0.3px">Вспомогательный персонал</div>
<div class="cell" style="left:662px;width:160px;text-align:center;top:512px;letter-spacing:-0.2px">25.07.2016</div>
<div class="cell" style="left:36px;top:532px;letter-spacing:0.15px">Парфенов Д. Ф.</div>
<div class="cell" style="left:195px;width:113px;text-align:center;top:532px;letter-spacing:-0.35px">1969</div>
<div class="cell" style="left:309px;width:160px;text-align:center;top:532px;letter-spacing:0.5px">муж.</div>
<div class="cell" style="left:470px;width:191px;text-align:center;top:532px;letter-spacing:0.3px">Основной персонал</div>
<div class="cell" style="left:662px;width:160px;text-align:center;top:532px;letter-spacing:-0.2px">25.07.2016</div>
<div class="cell" style="left:36px;top:552px;letter-spacing:0.25px">Петров Ф. Л.</div>
<div class="cell" style="left:195px;width:113px;text-align:center;top:552px;letter-spacing:-0.35px">1987</div>
<div class="cell" style="left:309px;width:160px;text-align:center;top:552px;letter-spacing:0.5px">муж.</div>
<div class="cell" style="left:470px;width:191px;text-align:center;top:552px;letter-spacing:0.3px">Основной персонал</div>
<div class="cell" style="left:662px;width:160px;text-align:center;top:552px;letter-spacing:-0.2px">25.07.2016</div>
<div class="a" style="left:308px;top:227px;width:162px;height:21px;border:1px solid #fff"></div>
<div class="a" style="left:309px;top:228px;width:160px;height:19px;border:1px solid #000"></div>
<div class="a" style="left:308px;top:248px;width:100px;height:1px;background:#000"></div>
<div class="a" style="left:871px;top:168px;width:16px;height:397px;background:linear-gradient(90deg,#e1e5ea,#eceff3)"></div>
<div class="a" style="left:872px;top:169px;width:14px;height:7px;background:#fff;border:1px solid #8e969f"></div>
<div class="a" style="left:875px;top:172px;width:8px;height:1px;background:#777"></div>
<svg class="a" style="left:873px;top:181px" width="11" height="6"><path d="M0 6h11L5.5 0z" fill="#444"/></svg>
<div class="a" style="left:872px;top:193px;width:14px;height:148px;border:1px solid #a3aab3;border-radius:2px;background:linear-gradient(90deg,#f5f6f8,#e8ebef 60%,#dde1e6)"></div>
<div class="a" style="left:875px;top:263px;width:8px;height:1px;background:#8a9099"></div>
<div class="a" style="left:875px;top:265px;width:8px;height:1px;background:#8a9099"></div>
<div class="a" style="left:875px;top:267px;width:8px;height:1px;background:#8a9099"></div>
<svg class="a" style="left:873px;top:553px" width="11" height="6"><path d="M0 0h11L5.5 6z" fill="#444"/></svg>
<div class="a" style="left:8px;top:565px;width:879px;height:16px;background:linear-gradient(#eef0f3,#e3e6ea)"></div>
<div class="a" style="left:8px;top:580px;width:879px;height:2px;background:#8f979f"></div>
<div class="a" style="left:70px;top:565px;width:1px;height:15px;background:#c9cfd6"></div>
<div class="a" style="left:71px;top:565px;width:456px;height:1px;background:#959ca5"></div><div class="a" style="left:71px;top:566px;width:456px;height:1px;background:#f7f8fa"></div>
<svg class="a" style="left:13px;top:568px" width="55" height="10"><rect x="0.5" y="0" width="1.5" height="9" fill="#444"/><path d="M7 0v9L2.5 4.5z" fill="#444"/><path d="M21 0v9L16.5 4.5z" fill="#444"/><path d="M31 0v9l4.5-4.5z" fill="#444"/><path d="M45 0v9l4.5-4.5z" fill="#444"/><rect x="50" y="0" width="1.5" height="9" fill="#444"/></svg>
<svg class="a" style="left:413px;top:565px" width="70" height="16"><path d="M1 16 L1 1.5 Q1 0.5 2 0.5 L65 0.5 L51 16z" fill="#fff"/><path d="M0.5 16 L0.5 1.5" stroke="#9aa1aa"/></svg>
<svg class="a" style="left:70px;top:565px" width="480" height="16"><path d="M7 15 L20 1" stroke="#8f969f" stroke-width="1" fill="none"/><path d="M8.2 15 L21.2 1" stroke="#fff" stroke-width="0.8" fill="none"/><path d="M8 15 L10.5 12.5 L12.5 15z" fill="#f4f6f8"/><path d="M60 15 L73 1" stroke="#8f969f" stroke-width="1" fill="none"/><path d="M61.2 15 L74.2 1" stroke="#fff" stroke-width="0.8" fill="none"/><path d="M61 15 L63.5 12.5 L65.5 15z" fill="#f4f6f8"/><path d="M113 15 L126 1" stroke="#8f969f" stroke-width="1" fill="none"/><path d="M114.2 15 L127.2 1" stroke="#fff" stroke-width="0.8" fill="none"/><path d="M114 15 L116.5 12.5 L118.5 15z" fill="#f4f6f8"/><path d="M166 15 L179 1" stroke="#8f969f" stroke-width="1" fill="none"/><path d="M167.2 15 L180.2 1" stroke="#fff" stroke-width="0.8" fill="none"/><path d="M167 15 L169.5 12.5 L171.5 15z" fill="#f4f6f8"/><path d="M220 15 L233 1" stroke="#8f969f" stroke-width="1" fill="none"/><path d="M221.2 15 L234.2 1" stroke="#fff" stroke-width="0.8" fill="none"/><path d="M221 15 L223.5 12.5 L225.5 15z" fill="#f4f6f8"/><path d="M281 15 L294 1" stroke="#8f969f" stroke-width="1" fill="none"/><path d="M282.2 15 L295.2 1" stroke="#fff" stroke-width="0.8" fill="none"/><path d="M282 15 L284.5 12.5 L286.5 15z" fill="#f4f6f8"/><path d="M394 15 L407 1" stroke="#8f969f" stroke-width="1" fill="none"/><path d="M395.2 15 L408.2 1" stroke="#fff" stroke-width="0.8" fill="none"/><path d="M395 15 L397.5 12.5 L399.5 15z" fill="#f4f6f8"/></svg>
<div class="t" style="left:91px;top:568px;font-size:12px;color:#444">Лист7</div>
<div class="t" style="left:144px;top:568px;font-size:12px;color:#444">Лист5</div>
<div class="t" style="left:197px;top:568px;font-size:12px;color:#444">Лист8</div>
<div class="t" style="left:250px;top:568px;font-size:12px;color:#444">Лист9</div>
<div class="t" style="left:304px;top:568px;font-size:12px;color:#444">Лист10</div>
<div class="t" style="left:365px;top:568px;font-size:12px;color:#444">Лист11</div>
<div class="t" style="left:424px;top:568px;font-size:12px;font-weight:bold;color:#222">Лист1</div>
<div class="t" style="left:478px;top:568px;font-size:12px;color:#444">Лист2</div>
<div class="a" style="left:527px;top:567px;width:7px;height:12px;background:#fff;border:1px solid #8e969f"></div>
<div class="a" style="left:530px;top:569px;width:1px;height:8px;background:#777"></div>
<svg class="a" style="left:539px;top:568px" width="6" height="10"><path d="M6 0v10L0 5z" fill="#444"/></svg>
<div class="a" style="left:550px;top:566px;width:208px;height:14px;border:1px solid #b7bdc5;border-radius:2px;background:linear-gradient(#f5f6f8,#e6e9ed 60%,#dde1e6)"></div>
<div class="a" style="left:651px;top:570px;width:1px;height:7px;background:#8a9099"></div>
<div class="a" style="left:653px;top:570px;width:1px;height:7px;background:#8a9099"></div>
<div class="a" style="left:655px;top:570px;width:1px;height:7px;background:#8a9099"></div>
<svg class="a" style="left:853px;top:568px" width="6" height="10"><path d="M0 0v10l6-5z" fill="#444"/></svg>
<div class="a" style="left:862px;top:567px;width:9px;height:13px;background:#fff;border:1px solid #8e969f"></div>
<div class="a" style="left:866px;top:570px;width:1px;height:7px;background:#777"></div>
<div class="a" style="left:871px;top:565px;width:16px;height:15px;background:#e1e5ea"></div>
<div class="a" style="left:8px;top:582px;width:879px;height:21px;background:linear-gradient(#f0f2f5,#dfe3e8 50%,#d2d7de)"></div>
<div class="t" style="left:17px;top:587px;font-size:11.5px;color:#222">Готово</div>
<div class="a" style="left:62px;top:583px;width:1px;height:19px;background:#a9b0b8"></div>
<div class="a" style="left:97px;top:583px;width:1px;height:19px;background:#a9b0b8"></div>
<div class="a" style="left:630px;top:583px;width:1px;height:19px;background:#a9b0b8"></div>
<svg class="a" style="left:72px;top:585px" width="16" height="13"><rect x="1.5" y="2.5" width="14" height="10" fill="#fff" stroke="#4a6aa8"/><rect x="2" y="3" width="13" height="2" fill="#5b8ad6"/><path d="M4 7.5h3M9 7.5h4M4 10h3M9 10h4" stroke="#6d88bb"/><circle cx="3.5" cy="3.5" r="3" fill="#d9452b"/></svg>
<div class="a" style="left:635px;top:584px;width:19px;height:18px;border:1px solid #e2b14c;border-radius:2px;background:linear-gradient(#fde9a8,#fcd66d 50%,#fde596)"></div>
<svg class="a" style="left:638px;top:587px" width="13" height="11"><rect x="0.5" y="0.5" width="12" height="10" fill="#fff" stroke="#555"/><path d="M0 3.5h13M0 6.5h13M4.5 0v11M8.5 0v11" stroke="#555"/></svg>
<svg class="a" style="left:657px;top:587px" width="13" height="11"><rect x="0.5" y="0.5" width="12" height="10" fill="#eee" stroke="#555"/><rect x="3.5" y="2.5" width="6" height="6" fill="#fff" stroke="#666"/></svg>
<svg class="a" style="left:675px;top:587px" width="13" height="11"><rect x="0.5" y="0.5" width="12" height="10" fill="#eee" stroke="#555"/><rect x="3" y="1" width="2" height="6" fill="#555"/><rect x="8" y="1" width="2" height="6" fill="#555"/></svg>
<div class="t" style="left:701px;top:587px;font-size:11.5px;color:#333">100%</div>
<div class="a" style="left:735px;top:585px;width:17px;height:17px;border-radius:50%;border:1px solid #6f767e;background:linear-gradient(#fff,#e3e6ea)"></div>
<div class="a" style="left:739px;top:592px;width:9px;height:2px;background:#444"></div>
<div class="a" style="left:752px;top:592px;width:98px;height:1px;background:#8c939b"></div><div class="a" style="left:752px;top:593px;width:98px;height:1px;background:#fff"></div>
<svg class="a" style="left:796px;top:585px" width="11" height="14"><path d="M0.5 0.5h10v8l-5 5-5-5z" fill="#f5f6f8" stroke="#6a7179"/></svg>
<div class="a" style="left:851px;top:585px;width:17px;height:17px;border-radius:50%;border:1px solid #6f767e;background:linear-gradient(#fff,#e3e6ea)"></div>
<div class="a" style="left:855px;top:592px;width:9px;height:2px;background:#444"></div><div class="a" style="left:858px;top:589px;width:2px;height:9px;background:#444"></div>
<svg class="a" style="left:877px;top:592px" width="10" height="10"><g fill="#b9bfc6"><rect x="7" y="1" width="2" height="2"/><rect x="4" y="4" width="2" height="2"/><rect x="7" y="4" width="2" height="2"/><rect x="1" y="7" width="2" height="2"/><rect x="4" y="7" width="2" height="2"/><rect x="7" y="7" width="2" height="2"/></g></svg>
<div class="a" style="left:397px;top:121px;width:299px;height:138px;background:#fff;border:1px solid #a9aeb4;border-radius:0 0 2px 2px;box-shadow:2px 2px 3px rgba(0,0,0,.22)"></div>
<svg class="a" style="left:406px;top:132px" width="30" height="24" viewBox="0 0 30 24"><defs><pattern id="h1" width="3" height="3" patternUnits="userSpaceOnUse" patternTransform="rotate(45)"><rect width="3" height="3" fill="#eef3fb"/><rect width="1.2" height="3" fill="#8fb0e0"/></pattern></defs><rect x="0.5" y="0.5" width="28" height="19" fill="#fff" stroke="#6e7f9a"/><rect x="1" y="1" width="27" height="4" fill="url(#h1)"/><rect x="1" y="1" width="9" height="18" fill="url(#h1)"/><rect x="10" y="5" width="9" height="3.5" fill="#8fb0e8"/><path d="M0 5.5h29M0 9.5h29M0 13.5h29M0 16.5h29M10.5 0v20M19.5 0v20" stroke="#8a9ab4" stroke-width="0.9"/><path d="M1.5 20v2.5h8v-2.5" fill="#fff" stroke="#6e7f9a"/></svg>
<svg class="a" style="left:406px;top:177px" width="30" height="24" viewBox="0 0 30 24"><defs><pattern id="h2" width="3" height="3" patternUnits="userSpaceOnUse" patternTransform="rotate(45)"><rect width="3" height="3" fill="#eef3fb"/><rect width="1.2" height="3" fill="#8fb0e0"/></pattern></defs><rect x="0.5" y="0.5" width="28" height="19" fill="#fff" stroke="#6e7f9a"/><rect x="1" y="1" width="27" height="4" fill="url(#h2)"/><path d="M0 5.5h29M0 9.5h29M0 13.5h29M0 16.5h29M10.5 0v20M19.5 0v20" stroke="#8a9ab4" stroke-width="0.9"/><path d="M1.5 20v2.5h8v-2.5" fill="#fff" stroke="#6e7f9a"/></svg>
<svg class="a" style="left:406px;top:222px" width="30" height="24" viewBox="0 0 30 24"><defs><pattern id="h3" width="3" height="3" patternUnits="userSpaceOnUse" patternTransform="rotate(45)"><rect width="3" height="3" fill="#eef3fb"/><rect width="1.2" height="3" fill="#8fb0e0"/></pattern></defs><rect x="0.5" y="0.5" width="28" height="19" fill="#fff" stroke="#6e7f9a"/><rect x="1" y="1" width="9" height="18" fill="url(#h3)"/><path d="M0 5.5h29M0 9.5h29M0 13.5h29M0 16.5h29M10.5 0v20M19.5 0v20" stroke="#8a9ab4" stroke-width="0.9"/><path d="M1.5 20v2.5h8v-2.5" fill="#fff" stroke="#6e7f9a"/></svg>
<div class="t" style="left:451px;top:127px;font-size:11px;font-weight:bold;color:#222"><u>З</u>акрепить области</div>
<div class="t" style="left:451px;top:142px;font-size:11.3px;color:#333">Выделенные строки и столбцы всегда будут</div>
<div class="t" style="left:451px;top:155px;font-size:11.3px;color:#333;letter-spacing:0.16px">видны на экране во время прокрутки листа.</div>
<div class="t" style="left:451px;top:172px;font-size:11px;font-weight:bold;color:#222">Закрепить вер<u>х</u>нюю строку</div>
<div class="t" style="left:451px;top:187px;font-size:11.3px;color:#333">Верхняя строка всегда будет видна на</div>
<div class="t" style="left:451px;top:200px;font-size:11.3px;color:#333;letter-spacing:0px">экране во время прокрутки листа.</div>
<div class="t" style="left:451px;top:217px;font-size:11px;font-weight:bold;color:#222">Закрепить первы<u>й</u> столбец</div>
<div class="t" style="left:451px;top:232px;font-size:11.3px;color:#333">Первый столбец всегда будет виден на</div>
<div class="t" style="left:451px;top:245px;font-size:11.3px;color:#333;letter-spacing:0px">экране во время прокрутки листа.</div>
<svg class="a" style="left:0;top:0" width="893" height="609" viewBox="0 0 893 609">
<path d="M397 94 L541 94 C545.5 94 547 95.5 547 99.5 L547 118 C547 120 546 120.3 543 120.3 L399 120.3 C394.5 120.3 392 118.5 392 114 L392 99 C392 95.5 393.5 94 397 94 Z" fill="none" stroke="#e8131b" stroke-width="5.4"/>
<path d="M388.6 150 L388.6 134 C388.6 126 392 123.2 402 122.8 C450 121.5 500 120.5 560 120.3 C610 120 640 121.5 656 124 C666 125.5 669 128 669 136 L669 150 C669 158 667 161 656 163 C640 166 560 166.8 470 166.5 C430 166.5 410 165 398 162.5 C390 160.5 388.6 157 388.6 150 Z" fill="none" stroke="#e8131b" stroke-width="5.2"/>
</svg>
</body></html>
